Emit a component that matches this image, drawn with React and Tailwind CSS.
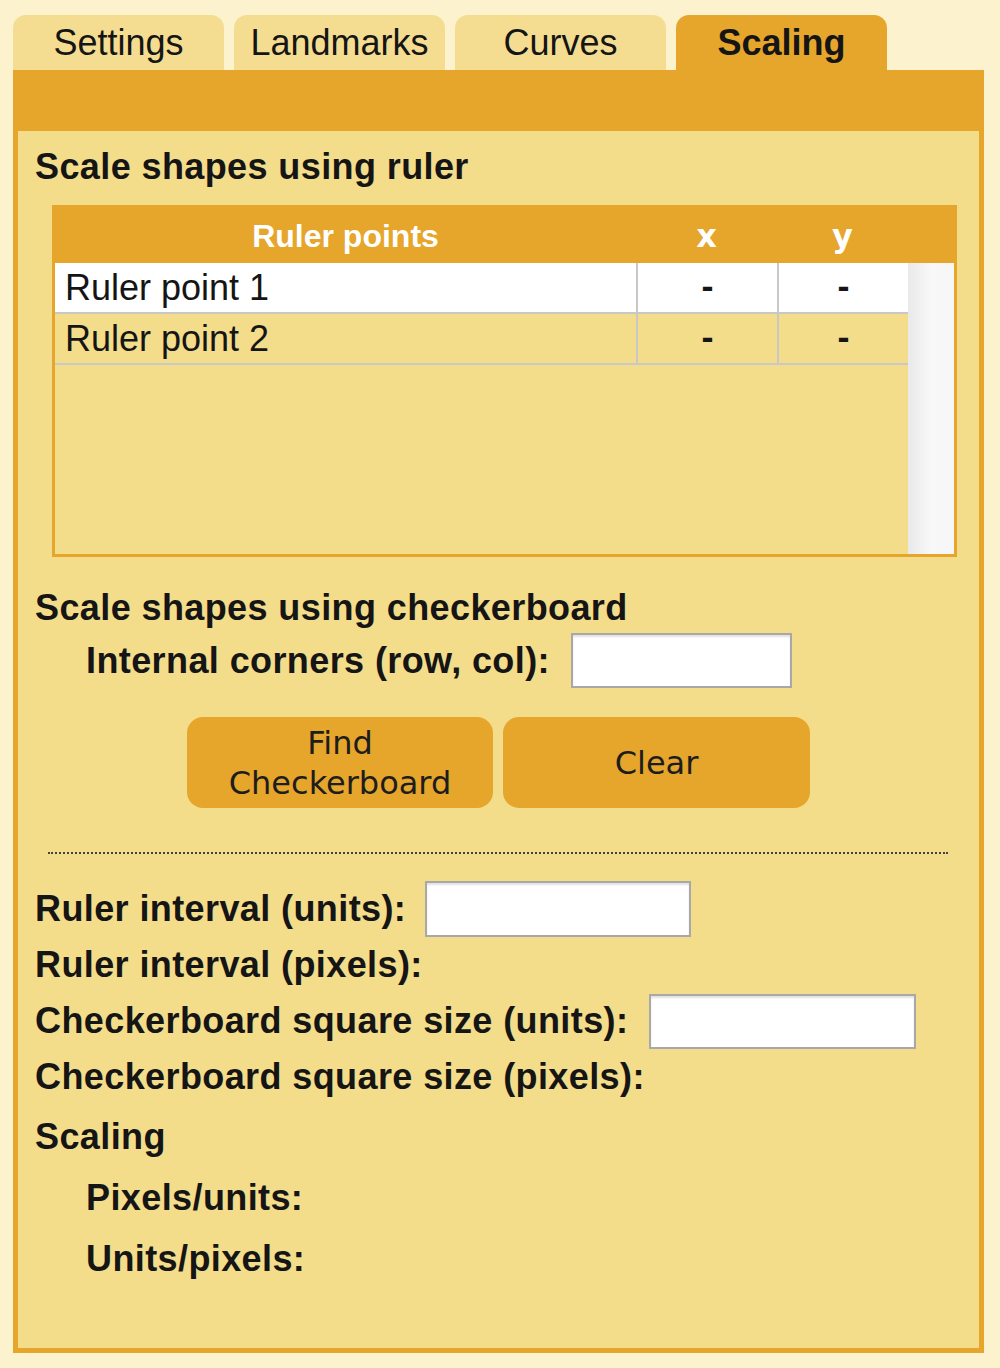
import React from 'react';

const tabs = ['Settings', 'Landmarks', 'Curves', 'Scaling'];
const rulerPoints = ['Ruler point 1', 'Ruler point 2'];

const TextBox = ({ className = '' }) => (
  <input
    type="text"
    readOnly
    className={`bg-white border-2 border-[#a8a8a8] shadow-[inset_0_2px_2px_rgba(0,0,0,0.12)] outline-none ${className}`}
  />
);

const App = () => {
  return (
    <div className="min-h-screen bg-[#fcf2cd] pt-[15px] pl-[13px] text-[#151515] font-['Liberation_Sans',Arial,sans-serif]">
      {/* tab strip */}
      <div className="flex gap-[10px]">
        {tabs.map((t) => (
          <div
            key={t}
            className={`w-[211px] h-[55px] rounded-t-[13px] flex items-center justify-center text-[36px] ${
              t === 'Scaling' ? 'bg-[#e6a52b] font-bold' : 'bg-[#f4dd90]'
            }`}
          >
            {t}
          </div>
        ))}
      </div>

      <div className="w-[971px] border-[5px] border-[#e6a52b] bg-[#f3dc8a]">
        <div className="h-[56px] bg-[#e6a52b]" />

        <div className="px-[17px] pt-[16px] pb-[59px]">
          <h2 className="text-[36px] leading-[40px] font-bold tracking-[0.4px]">Scale shapes using ruler</h2>

          {/* ruler points table */}
          <div className="mt-[18px] ml-[17px] w-[905px] border-[3px] border-[#e6a52b]">
            <div className="h-[55px] bg-[#e6a52b] grid grid-cols-[581px_141px_131px_1fr] items-center text-white font-bold">
              <div className="text-center text-[32px]">Ruler points</div>
              <div className="text-center text-[32px] font-['DejaVu_Sans',sans-serif]">x</div>
              <div className="text-center text-[32px] font-['DejaVu_Sans',sans-serif]">y</div>
              <div />
            </div>
            <div className="flex h-[291px]">
              <div className="w-[853px]">
                {rulerPoints.map((p, i) => (
                  <div
                    key={p}
                    className={`flex h-[51px] border-b-2 border-[#c8c8c8] ${i === 0 ? 'bg-white' : 'bg-[#f3dc8a]'}`}
                  >
                    <div className="w-[581px] pl-[10px] flex items-center text-[36px]">{p}</div>
                    <div className="w-[141px] border-l-2 border-[#c8c8c8] flex items-center justify-center text-[30px] font-bold font-['DejaVu_Sans',sans-serif]">-</div>
                    <div className="w-[131px] border-l-2 border-[#c8c8c8] flex items-center justify-center text-[30px] font-bold font-['DejaVu_Sans',sans-serif]">-</div>
                  </div>
                ))}
              </div>
              <div className="flex-1 bg-gradient-to-r from-[#e9e9e9] via-[#f8f8f8] to-[#f6f6f6]" />
            </div>
          </div>

          <h2 className="mt-[31px] text-[36px] leading-[40px] font-bold tracking-[0.4px]">Scale shapes using checkerboard</h2>
          <div className="mt-[5px] pl-[51px] flex items-center">
            <span className="text-[36px] font-bold tracking-[0.4px]">Internal corners (row, col):</span>
            <TextBox className="ml-[21px] w-[221px] h-[55px]" />
          </div>

          <div className="mt-[29px] flex justify-center gap-[10px] font-['DejaVu_Sans',sans-serif] text-[32px] leading-[40px] text-[#1d1d1d]">
            <button className="w-[306px] h-[91px] rounded-[16px] bg-[#e6a52b]">
              Find
              <br />
              Checkerboard
            </button>
            <button className="w-[307px] h-[91px] rounded-[16px] bg-[#e6a52b]">Clear</button>
          </div>

          <div className="mt-[44px] ml-[13px] mr-[14px] border-t-2 border-dotted border-[#444]" />

          <div className="mt-[27px] text-[36px] font-bold tracking-[0.4px]">
            <div className="h-[56px] flex items-center">
              <span>Ruler interval (units):</span>
              <TextBox className="ml-[19px] w-[266px] h-[56px]" />
            </div>
            <div className="h-[56px] flex items-center">Ruler interval (pixels):</div>
            <div className="h-[56px] flex items-center">
              <span>Checkerboard square size (units):</span>
              <TextBox className="ml-[21px] w-[267px] h-[55px]" />
            </div>
            <div className="h-[56px] flex items-center">Checkerboard square size (pixels):</div>

            <div className="mt-[1px] h-[61px] flex items-center">Scaling</div>
            <div className="h-[61px] pl-[51px] flex items-center">Pixels/units:</div>
            <div className="h-[61px] pl-[51px] flex items-center">Units/pixels:</div>
          </div>
        </div>
      </div>
    </div>
  );
};

export default App;
